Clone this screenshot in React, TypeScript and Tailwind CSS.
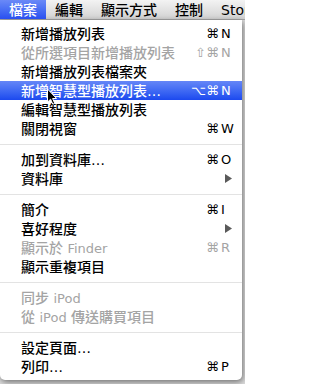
import React from "react";

type Item =
  | { kind: "sep" }
  | {
      kind: "item";
      label: React.ReactNode;
      mods?: string;
      keyChar?: string;
      disabled?: boolean;
      active?: boolean;
      submenu?: boolean;
    };

const items: Item[] = [
  { kind: "item", label: "新增播放列表", mods: "⌘", keyChar: "N" },
  { kind: "item", label: "從所選項目新增播放列表", mods: "⇧⌘", keyChar: "N", disabled: true },
  { kind: "item", label: "新增播放列表檔案夾" },
  { kind: "item", label: "新增智慧型播放列表…", mods: "⌥⌘", keyChar: "N", active: true },
  { kind: "item", label: "編輯智慧型播放列表" },
  { kind: "item", label: "關閉視窗", mods: "⌘", keyChar: "W" },
  { kind: "sep" },
  { kind: "item", label: "加到資料庫…", mods: "⌘", keyChar: "O" },
  { kind: "item", label: "資料庫", submenu: true },
  { kind: "sep" },
  { kind: "item", label: "簡介", mods: "⌘", keyChar: "I" },
  { kind: "item", label: "喜好程度", submenu: true },
  {
    kind: "item",
    label: (
      <>
        顯示於 <span className="text-[13px] font-normal">Finder</span>
      </>
    ),
    mods: "⌘",
    keyChar: "R",
    disabled: true,
  },
  { kind: "item", label: "顯示重複項目" },
  { kind: "sep" },
  {
    kind: "item",
    label: (
      <>
        同步 <span className="text-[13px] font-normal">iPod</span>
      </>
    ),
    disabled: true,
  },
  {
    kind: "item",
    label: (
      <>
        從 <span className="text-[13px] font-normal">iPod</span> 傳送購買項目
      </>
    ),
    disabled: true,
  },
  { kind: "sep" },
  { kind: "item", label: "設定頁面…" },
  { kind: "item", label: "列印…", mods: "⌘", keyChar: "P" },
];

function MenuRow({ item }: { item: Item }) {
  if (item.kind === "sep") {
    return (
      <div className="h-[12px] flex items-center">
        <div className="h-px w-full bg-[#e3e3e3]" />
      </div>
    );
  }
  const color = item.active
    ? "text-white bg-gradient-to-b from-[#6586f7] to-[#1c48ef]"
    : item.disabled
      ? "text-[#a4a4a4]"
      : "text-black";
  return (
    <div className={`h-[19px] flex items-center pl-[21px] pr-[9px] ${color}`}>
      <span className="flex-1 whitespace-nowrap font-medium">{item.label}</span>
      {item.keyChar && (
        <span className="w-[44px] flex text-[13px]">
          <span className="flex-1 text-right">{item.mods}</span>
          <span className="w-[12px] ml-[2px]">{item.keyChar}</span>
        </span>
      )}
      {item.submenu && (
        <svg width="7" height="9" viewBox="0 0 7 9" className="mr-[1px]">
          <polygon points="0,0 7,4.5 0,9" fill="#5a5a5a" />
        </svg>
      )}
    </div>
  );
}

export default function App() {
  return (
    <div
      className="w-[245px] h-[384px] relative overflow-hidden bg-[#dcdcdc] text-[14px] leading-none"
      style={{ fontFamily: '"DejaVu Sans", "Noto Sans CJK TC", sans-serif' }}
    >
      {/* menu bar */}
      <div className="h-[20px] flex items-stretch bg-gradient-to-b from-[#f3f3f3] to-[#d3d3d3] border-b border-[#a8a8a8] whitespace-nowrap font-medium">
        <div className="px-[9px] flex items-center text-white bg-gradient-to-b from-[#6a89f7] to-[#2a4ff0]">檔案</div>
        <div className="px-[9px] flex items-center">編輯</div>
        <div className="px-[9px] flex items-center">顯示方式</div>
        <div className="px-[9px] flex items-center">控制</div>
        <div className="px-[9px] flex items-center font-normal">Stor</div>
      </div>

      {/* dropdown */}
      <div className="w-[242px] bg-white rounded-b-[5px] py-[4px] shadow-[1px_2px_6px_rgba(0,0,0,0.5)]">
        {items.map((it, i) => (
          <MenuRow key={i} item={it} />
        ))}
      </div>

      {/* pointer */}
      <svg
        className="absolute left-[46px] top-[88px]"
        width="12"
        height="18"
        viewBox="0 0 12 18"
      >
        <path
          d="M1.5 1 L1.5 14 L4.6 11.2 L6.8 16.2 L8.8 15.4 L6.6 10.5 L10.6 10.5 Z"
          fill="#000"
          stroke="#fff"
          strokeWidth="1"
          strokeLinejoin="round"
        />
      </svg>
    </div>
  );
}
